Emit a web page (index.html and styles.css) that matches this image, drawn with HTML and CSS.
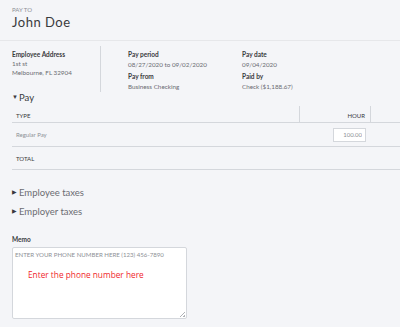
FILE: index.html
```html
<!DOCTYPE html>
<html>

<head>
  <meta charset="utf-8">
  <meta name="viewport" content="width=device-width, initial-scale=1.0">
  <link rel="stylesheet" href="styles.css">
</head>

<body>
  <div id="header">
    <div class="smallLabel">PAY TO</div>
    <div id="payee">John Doe</div>
  </div>

  <div id="details">
    <div class="address">
      <div class="fieldName">Employee Address</div>
      <div class="fieldValue">1st st</div>
      <div class="fieldValue">Melbourne, FL 32904</div>
    </div>
    <div class="divider"></div>
    <div class="col colPeriod">
      <div class="fieldName">Pay period</div>
      <div class="fieldValue">08/27/2020 to 09/02/2020</div>
      <div class="fieldName second">Pay from</div>
      <div class="fieldValue">Business Checking</div>
    </div>
    <div class="col">
      <div class="fieldName">Pay date</div>
      <div class="fieldValue">09/04/2020</div>
      <div class="fieldName second">Paid by</div>
      <div class="fieldValue">Check ($1,188.67)</div>
    </div>
  </div>

  <div class="section open"><span class="arrow">&#9660;</span>Pay</div>

  <div id="payTable">
    <div class="row headRow">
      <div class="cell typeCell">TYPE</div>
      <div class="cell hourCell">HOUR</div>
      <div class="cell lastCell"></div>
    </div>
    <div class="row payRow">
      <div class="cell typeCell light">Regular Pay</div>
      <div class="cell hourCell"><input class="hours" type="text" value="100.00"></div>
      <div class="cell lastCell"></div>
    </div>
    <div class="row">
      <div class="cell typeCell">TOTAL</div>
    </div>
  </div>

  <div class="section closed"><span class="arrow">&#9654;</span>Employee taxes</div>
  <div class="section closed"><span class="arrow">&#9654;</span>Employer taxes</div>

  <div id="memo">
    <div class="fieldName">Memo</div>
    <div class="memoBox">
      <div class="memoText">ENTER YOUR PHONE NUMBER HERE (123) 456-7890</div>
      <div class="note">Enter the phone number here</div>
      <div class="grip"></div>
    </div>
  </div>
</body>

</html>
```

FILE: styles.css
```css
html {
  font-family: Lato, "Open Sans", sans-serif;
}

body {
  margin: 0;
  width: 400px;
  height: 327px;
  overflow: hidden;
  background-color: #f4f5f8;
  color: #393a3d;
}

#header {
  height: 41px;
  box-sizing: border-box;
  padding: 6px 12px 0;
  border-bottom: 1px solid #e6e7ea;
}

.smallLabel {
  font-size: 6px;
  color: #8d9096;
  line-height: 8px;
}

#payee {
  font-size: 13px;
  line-height: 16px;
  letter-spacing: 0.5px;
}

#details {
  display: flex;
  padding: 5px 0 0 12px;
  height: 46px;
}

.address {
  width: 88px;
  padding-top: 4px;
}

.address .fieldName {
  line-height: 10px;
}

.address .fieldValue {
  line-height: 8.5px;
}

.divider {
  width: 1px;
  background-color: #d4d7dc;
  height: 46px;
}

.col {
  padding-top: 4px;
  margin-left: 27px;
}

.colPeriod {
  width: 87px;
}

.fieldName {
  font-size: 6.5px;
  font-weight: bold;
  line-height: 10px;
  color: #393a3d;
}

.fieldName.second {
  margin-top: 2px;
}

.fieldValue {
  font-size: 6.3px;
  line-height: 10px;
  color: #6b6c72;
}

.section {
  font-size: 9.5px;
  line-height: 14px;
  color: #6b6c72;
  padding-left: 12px;
}

.section.open {
  margin-top: -1px;
  line-height: 12px;
  color: #393a3d;
}

.arrow {
  display: inline-block;
  font-size: 6px;
  width: 7px;
  color: #393a3d;
  vertical-align: 2px;
}

#payTable {
  margin: 2px 0 0 12px;
}

.row {
  display: flex;
  height: 23px;
  border-bottom: 1px solid #d4d7dc;
  box-sizing: border-box;
  align-items: center;
  font-size: 6px;
}

.headRow {
  height: 17px;
  align-items: stretch;
}

.payRow {
  height: 24px;
}

.headRow .cell {
  display: flex;
  align-items: center;
  padding-top: 3px;
}

.cell {
  box-sizing: border-box;
}

.typeCell {
  width: 288px;
  padding-left: 4px;
}

.light {
  color: #8d9096;
}

.hourCell {
  width: 71px;
  padding-right: 5px;
  display: flex;
  justify-content: flex-end;
}

.headRow .typeCell,
.headRow .hourCell {
  border-right: 1px solid #d4d7dc;
}

.lastCell {
  flex-grow: 1;
}

.hours {
  all: unset;
  box-sizing: border-box;
  width: 33px;
  height: 14px;
  background-color: #fff;
  border: 1px solid #d4d7dc;
  font-size: 6px;
  color: #8d9096;
  text-align: right;
  padding-right: 3px;
}

.closed {
  margin-top: 4px;
}

#payTable + .closed {
  margin-top: 15px;
}

#memo {
  padding: 16px 0 0 12px;
}

.memoBox {
  position: relative;
  width: 175px;
  height: 72px;
  margin-top: 2px;
  box-sizing: border-box;
  background-color: #fff;
  border: 1px solid #d4d7dc;
  border-radius: 2px;
  padding: 3px 2px;
}

.memoText {
  font-size: 6.1px;
  color: #8d9096;
  line-height: 8px;
}

.note {
  font-family: "Open Sans", sans-serif;
  font-size: 8.3px;
  color: #f0262d;
  margin: 10px 0 0 13px;
}

.grip {
  position: absolute;
  right: 1px;
  bottom: 1px;
  width: 5px;
  height: 5px;
  background: linear-gradient(135deg, transparent 45%, #b0b3b8 45%, #b0b3b8 55%, transparent 55%, transparent 75%, #b0b3b8 75%);
}
```
